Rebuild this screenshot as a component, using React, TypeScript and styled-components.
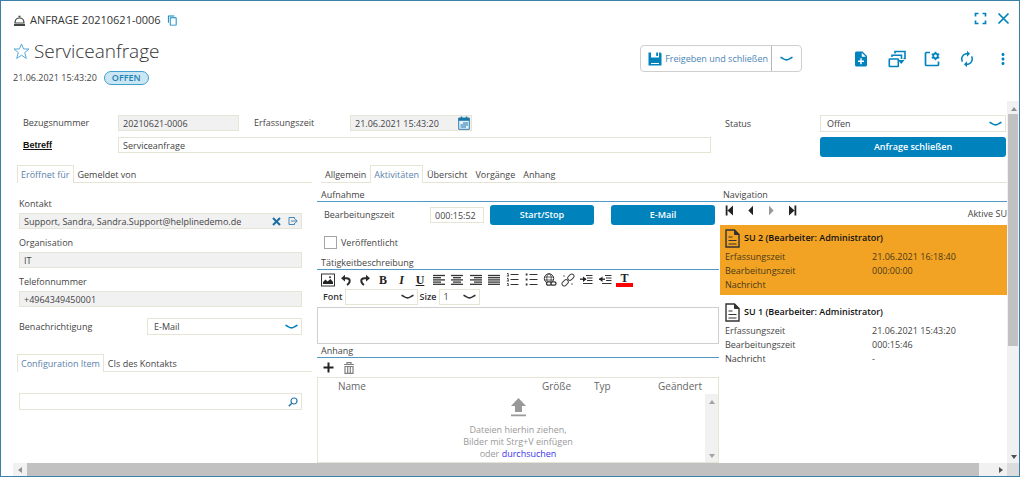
import React from "react";
import styled, { createGlobalStyle } from "styled-components";
import { MdAutorenew, MdContentCopy, MdMoreVert, MdNoteAdd } from "react-icons/md";

const c = {
  blue: "#0082bd",
  frame: "#3b80a9",
  line: "#e6e4d4",
  rule: "#4e9ac4",
  text: "#444444",
  link: "#5b82ab",
  orange: "#f2a324",
  disabled: "#f1f1f1",
  track: "#f1f1f1",
  thumb: "#c1c1c1",
};

const GlobalStyle = createGlobalStyle`
  * { box-sizing: border-box; }
  body {
    margin: 0;
    background: #fff;
    color: ${c.text};
    font-family: "Open Sans", "Liberation Sans", sans-serif;
    font-size: 9px;
    line-height: 12px;
  }
  button, input, select, textarea { font: inherit; color: inherit; margin: 0; }
  svg { display: block; flex: none; }
`;

const Window = styled.div`
  display: flex;
  flex-direction: column;
  min-height: 100vh;
  border: 1px solid ${c.frame};
`;

/* Header */
const Header = styled.header`
  display: flex;
  justify-content: space-between;
  padding: 11px 7px 16px 12px;
`;
const HeaderSide = styled.div`
  display: flex;
  flex-direction: column;
`;
const Crumb = styled.div`
  display: flex;
  align-items: center;
  height: 16px;
  font-size: 11px;
  gap: 4px;
  color: #333;
`;
const TitleRow = styled.div`
  display: flex;
  align-items: center;
  gap: 4px;
  height: 28px;
  margin: 9px 0 6px;
`;
const Title = styled.h1`
  margin: 0;
  font-size: 19px;
  line-height: 28px;
  font-weight: 300;
  color: #333;
`;
const Meta = styled.div`
  display: flex;
  align-items: center;
  gap: 7px;
`;
const Badge = styled.span`
  padding: 0 7px;
  border: 1px solid #3fa0cd;
  border-radius: 8px;
  background: #cbe6f3;
  color: #1d80b5;
  font-weight: 600;
`;
const IconButton = styled.button<{ $tone?: string }>`
  display: flex;
  align-items: center;
  justify-content: center;
  padding: 0;
  border: 0;
  background: none;
  color: ${(p) => p.$tone ?? c.blue};
`;
const CopyButton = styled(IconButton)`
  margin-left: 2px;
`;
const WindowControls = styled.div`
  display: flex;
  justify-content: flex-end;
  gap: 10px;
  padding-right: 2px;
`;
const Actions = styled.div`
  display: flex;
  align-items: center;
  margin-top: 20px;
`;
const SplitButton = styled.div`
  display: flex;
  height: 27px;
  margin-right: 50px;
  border: 1px solid #cfcfcf;
  border-radius: 4px;
`;
const SplitMain = styled(IconButton)`
  gap: 3px;
  padding: 0 3px 0 7px;
  color: #4a85b5;
`;
const SplitMore = styled(IconButton)`
  width: 30px;
  border-left: 1px solid #b5b5b5;
`;
const ActionIcons = styled.div`
  display: flex;
  align-items: center;
  gap: 18px;
`;

/* Scroll frame */
const Frame = styled.div`
  flex: 1;
  display: grid;
  grid-template-columns: minmax(0, 1fr) 12px;
  grid-template-rows: 1fr 13px;
  padding-left: 12px;
`;
const Track = styled.div<{ $vertical?: boolean }>`
  display: flex;
  flex-direction: ${(p) => (p.$vertical ? "column" : "row")};
  background: ${c.track};
`;
const TrackEnd = styled.div<{ $tone?: string }>`
  display: flex;
  align-items: center;
  justify-content: center;
  flex: none;
  width: 13px;
  height: 13px;
  color: ${(p) => p.$tone ?? "#505050"};
`;
const Thumb = styled.div<{ $grow: number }>`
  flex: ${(p) => p.$grow} 1 0;
  margin: 0 1px;
  background: ${c.thumb};
`;
const Rest = styled.div<{ $grow: number }>`
  flex: ${(p) => p.$grow} 1 0;
`;
const Corner = styled.div`
  background: #dcdcdc;
`;
const Content = styled.main`
  display: flex;
  flex-direction: column;
  min-width: 0;
`;

/* Fields */
const Input = styled.input`
  width: 100%;
  min-width: 0;
  height: 16px;
  padding: 0 4px;
  border: 1px solid ${c.line};
  border-radius: 0;
  background: #fff;
  &:read-only { background: ${c.disabled}; }
`;
const FieldBox = styled.div<{ $snug?: boolean }>`
  display: flex;
  align-items: center;
  gap: 7px;
  height: 16px;
  padding-right: ${(p) => (p.$snug ? 1 : 3)}px;
  border: 1px solid ${c.line};
  background: ${c.disabled};
`;
const SearchBox = styled(FieldBox)`
  height: 17px;
  margin: 21px 15px 0 2px;
  background: #fff;
`;
const BareInput = styled.input`
  flex: 1;
  min-width: 0;
  height: 14px;
  padding: 0 4px;
  border: 0;
  background: none;
`;
const SelectWrap = styled.span<{ $w?: number; $tone?: string }>`
  display: grid;
  align-items: center;
  ${(p) => (p.$w ? `width: ${p.$w}px;` : "")}
  color: ${(p) => p.$tone ?? c.blue};
  > * { grid-area: 1 / 1; }
  > svg { justify-self: end; margin-right: 4px; pointer-events: none; }
`;
const SelectBox = styled.select`
  appearance: none;
  width: 100%;
  height: 17px;
  padding: 0 6px;
  border: 1px solid ${c.line};
  border-radius: 0;
  background: #fff;
  color: ${c.text};
`;
const Primary = styled.button`
  height: 20px;
  border: 0;
  border-radius: 3px;
  background: ${c.blue};
  color: #fff;
  font-weight: 600;
`;

/* Top form */
const TopForm = styled.section`
  display: grid;
  grid-template-columns: minmax(0, 707fr) minmax(0, 287fr);
  padding: 14px 0 8px;
`;
const RequestGrid = styled.div`
  display: grid;
  grid-template-columns: 95px minmax(0, 121fr) 111px minmax(0, 122fr) minmax(0, 239fr);
  grid-auto-rows: 16px;
  row-gap: 6px;
  align-items: center;
  padding: 0 9px 0 10px;
`;
const StatusGrid = styled.div`
  display: grid;
  grid-template-columns: 95px minmax(0, 1fr);
  row-gap: 5px;
  align-items: center;
  padding: 0 1px 0 5px;
  ${Primary} { grid-column: 2; }
`;
const SecondLabel = styled.label`
  padding-left: 15px;
`;
const KeyLabel = styled.label`
  color: #111;
  font-family: "Liberation Sans", sans-serif;
  font-weight: 700;
  text-decoration: underline;
`;
const WideCell = styled.div`
  display: flex;
  grid-column: 2 / -1;
`;

/* Tabs */
const TabBar = styled.div<{ $left?: boolean }>`
  display: flex;
  height: 18px;
  margin: 0 ${(p) => (p.$left ? 5 : 0)}px 0 ${(p) => (p.$left ? 0 : 4)}px;
  border-bottom: 1px solid ${c.line};
`;
const Tab = styled.button<{ $on?: boolean }>`
  height: 18px;
  padding: 0 3px;
  border: 1px solid transparent;
  border-bottom: 0;
  background: none;
  color: ${(p) => (p.$on ? c.link : c.text)};
  ${(p) => p.$on && `border-color: ${c.line}; background: #fff;`}
`;

/* Panels */
const Panels = styled.div`
  flex: 1;
  display: grid;
  grid-template-columns: minmax(0, 304fr) minmax(0, 690fr);
`;
const LeftPanel = styled.section`
  padding-left: 4px;
`;
const Stack = styled.div`
  display: flex;
  flex-direction: column;
  gap: 8px;
  padding: 15px 15px 0 2px;
`;
const Field = styled.div`
  display: flex;
  flex-direction: column;
  gap: 3px;
`;
const NotifyRow = styled.div`
  display: grid;
  grid-template-columns: 128px minmax(0, 1fr);
  align-items: center;
  margin: 11px 15px 19px 2px;
`;
const RightPanel = styled.section`
  display: flex;
  flex-direction: column;
`;
const Columns = styled.div`
  flex: 1;
  display: grid;
  grid-template-columns: minmax(0, 402fr) minmax(0, 288fr);
`;
const Column = styled.div`
  display: flex;
  flex-direction: column;
  min-width: 0;
`;
const SectionTitle = styled.h2<{ $tight?: boolean }>`
  margin: 0;
  padding: ${(p) => (p.$tight ? 1 : 6)}px 4px 0;
  border-bottom: 1px solid ${c.rule};
  font: inherit;
`;
const TimeRow = styled.div`
  display: grid;
  grid-template-columns: 106px 54px minmax(0, 1fr);
  align-items: center;
  padding: 3px 4px 0 7px;
`;
const ButtonPair = styled.div`
  display: grid;
  grid-template-columns: 1fr 1fr;
  gap: 17px;
  margin-left: 6px;
`;
const CheckRow = styled.label`
  display: flex;
  align-items: center;
  gap: 4px;
  margin: 11px 7px 2px;
  input {
    appearance: none;
    width: 13px;
    height: 13px;
    border: 1px solid #a5a5a5;
    background: #fff;
  }
`;
const Toolbar = styled.div`
  display: flex;
  align-items: center;
  justify-content: space-between;
  max-width: 319px;
  height: 19px;
  padding: 0 3px;
`;
const Tool = styled(IconButton)`
  flex: 0 1 15px;
  height: 15px;
  color: #333;
`;
const Letter = styled.span`
  font: bold 12px/14px "Liberation Serif", serif;
  color: #222;
`;
const Italic = styled(Letter)`
  font-style: italic;
`;
const Underlined = styled(Letter)`
  text-decoration: underline;
`;
const ColorLetter = styled(Letter)`
  flex: none;
  width: 17px;
  height: 14px;
  line-height: 10px;
  border-bottom: 4px solid #f00;
`;
const FontRow = styled.div`
  display: flex;
  align-items: center;
  gap: 2px;
  height: 16px;
  padding-left: 6px;
  font-weight: 600;
  color: #333;
  ${SelectBox} { height: 16px; font-weight: 400; padding: 0 4px; }
`;
const Editor = styled.textarea`
  height: 37px;
  margin-top: 2px;
  border: 1px solid #cfcfcf;
  border-radius: 0;
  resize: none;
`;
const FileTools = styled.div`
  display: flex;
  align-items: center;
  gap: 10px;
  height: 19px;
  padding-left: 6px;
`;
const FileBox = styled.div`
  flex: 1;
  display: flex;
  flex-direction: column;
  border: 1px solid ${c.line};
  font-size: 10px;
`;
const FileTable = styled.table`
  width: 100%;
  table-layout: fixed;
  border-collapse: collapse;
  color: #666;
  th { height: 16px; padding: 0; font-weight: 400; text-align: left; }
`;
const HeadCell = styled.th<{ $w: number }>`
  width: ${(p) => p.$w}%;
`;
const DropRow = styled.div`
  flex: 1;
  display: flex;
`;
const DropZone = styled.div`
  flex: 1;
  display: flex;
  flex-direction: column;
  align-items: center;
  padding: 4px 0 0 13px;
  color: #999;
  font-size: 9px;
  text-align: center;
  svg { margin-bottom: 7px; }
  a { color: #3a34f0; text-decoration: none; }
`;
const FileTrack = styled(Track)`
  width: 13px;
  justify-content: space-between;
`;

/* Navigation */
const NavBar = styled.div`
  display: flex;
  align-items: center;
  justify-content: space-between;
  height: 23px;
  padding-left: 6px;
`;
const NavButtons = styled.div`
  display: flex;
  align-items: center;
  gap: 12px;
  padding-bottom: 6px;
`;
const Card = styled.article<{ $on?: boolean }>`
  height: 70px;
  margin: 0 0 4px 1px;
  padding: 3px 5px 0;
  ${(p) => p.$on && `background: ${c.orange}; color: #4a3a18;`}
`;
const CardHead = styled.h3`
  display: flex;
  align-items: center;
  gap: 4px;
  height: 20px;
  margin: 0 0 2px;
  font-size: 9px;
  font-weight: 600;
  color: #111;
`;
const CardData = styled.dl`
  display: grid;
  grid-template-columns: 147px minmax(0, 1fr);
  grid-auto-rows: 14px;
  margin: 0;
  line-height: 14px;
  dd { margin: 0; }
`;

/* Icons */
const Bell = () => (
  <svg width="13" height="13" viewBox="0 0 13 13" fill="none" stroke="#444">
    <path d="M2 9C2 5.500 4 4 6.500 4S11 5.500 11 9Z" strokeWidth="1.200" />
    <path d="M5.500 2.500H7.500" strokeWidth="1.600" />
    <path d="M1 11H12" strokeWidth="2" />
  </svg>
);
const Chevron = () => (
  <svg width="13" height="6" viewBox="0 0 13 6" fill="none" stroke="currentColor" strokeWidth="1.600">
    <path d="M.5 1.200C3 2.200 4.500 3.900 6.500 3.900S10 2.200 12.500 1.200" />
  </svg>
);
const Arrow = ({ dir }: { dir: "up" | "down" | "left" | "right" }) => {
  const d = { up: "M0 6 3 2 6 6Z", down: "M0 1 3 5 6 1Z", left: "M5 0 1 3 5 6Z", right: "M1 0 5 3 1 6Z" }[dir];
  return (
    <svg width="6" height="6" viewBox="0 0 6 6" fill="currentColor">
      <path d={d} />
    </svg>
  );
};
const Star = () => (
  <svg width="17" height="17" viewBox="0 0 17 17" fill="none" stroke="#55a9d6" strokeWidth="1">
    <path d="M8.500 1 10.600 6H16L11.700 9.600 13.300 15.500 8.500 12.200 3.700 15.500 5.300 9.600 1 6H6.400Z" />
  </svg>
);
const Fullscreen = () => (
  <svg width="13" height="13" viewBox="0 0 13 13" fill="none" stroke="currentColor" strokeWidth="1.700">
    <path d="M1.500 4.500V1.500H4.500M8.500 1.500H11.500V4.500M11.500 8.500V11.500H8.500M4.500 11.500H1.500V8.500" />
  </svg>
);
const Close = () => (
  <svg width="13" height="13" viewBox="0 0 13 13" fill="none" stroke="currentColor" strokeWidth="1.700">
    <path d="M1.500 1.500 11.500 11.500M11.500 1.500 1.500 11.500" />
  </svg>
);
const Disk = () => (
  <svg width="14" height="14" viewBox="0 0 14 14" fill={c.blue}>
    <path d="M.5.5H3V5.500H11V.5H12.500L13.500 1.500V13.500H.5Z" />
    <path d="M8.200.5H10V4H8.200Z" />
    <path d="M3 11.500H11" stroke="#fff" strokeWidth="1" />
  </svg>
);
const Windows = () => (
  <svg width="18" height="18" viewBox="0 0 18 18" fill="none" stroke="currentColor" strokeWidth="1.600">
    <rect x="1.300" y="9" width="9" height="7.500" rx=".5" />
    <path d="M4 7V5.300H13.500V9M7 3.500V1.500H17V8.500H15.500" />
    <path d="M10 10H16.500L13.200 14Z" fill="currentColor" stroke="none" />
  </svg>
);
const PanelGear = () => (
  <svg width="16" height="16" viewBox="0 0 16 16" fill="none" stroke="currentColor">
    <path d="M6 1.500H2.500A1 1 0 0 0 1.500 2.500V13.500A1 1 0 0 0 2.500 14.500H13.500A1 1 0 0 0 14.500 13.500V10.500" strokeWidth="1.700" />
    <circle cx="11.500" cy="5" r="2.300" strokeWidth="1.800" />
    <path d="M11.500.7V2.200M11.500 7.800V9.300M7.800 2.900 9 3.600M14 6.400 15.200 7.100M7.800 7.100 9 6.400M14 3.600 15.200 2.900" strokeWidth="1.700" />
  </svg>
);
const Calendar = () => (
  <svg width="12" height="14" viewBox="0 0 12 14">
    <path d="M.7 2H11.300V13.300H.7Z" fill="#e6f1f8" stroke="#2a7fb0" />
    <path d="M.5 2H11.500V4.800H.5Z" fill="#1c76a8" />
    <path d="M3.500.5V3.500M8.500.5V3.500" stroke="#1c76a8" strokeWidth="1.500" />
    <path d="M5 7H10M2.500 9H10M2.500 11H8" stroke="#5ba0c8" strokeWidth="1.300" />
  </svg>
);
const Clear = () => (
  <svg width="9" height="9" viewBox="0 0 9 9" stroke="#1b6ea3" strokeWidth="2">
    <path d="M1 1 8 8M8 1 1 8" />
  </svg>
);
const OpenEntry = () => (
  <svg width="10" height="10" viewBox="0 0 10 10" fill="none" stroke="#4486b4" strokeWidth="1">
    <path d="M6.500 3V1.500H1V8.500H6.500V7M3 5H9M7 2.800 9.200 5 7 7.200" />
  </svg>
);
const Search = () => (
  <svg width="10" height="10" viewBox="0 0 10 10" fill="none" stroke="#2f78ab" strokeWidth="1.200">
    <circle cx="6" cy="4" r="3" />
    <path d="M3.800 6.200.8 9.200" strokeWidth="1.500" />
  </svg>
);
const Picture = () => (
  <svg width="14" height="14" viewBox="0 0 14 14">
    <rect x=".5" y="1" width="13" height="12" fill="#fff" stroke="#333" />
    <path d="M2 11V9L4.500 6.500 6.500 8.500 9.500 6 12 9V11Z" fill="#222" />
    <circle cx="9" cy="4.300" r="1" fill="#333" />
  </svg>
);
const Undo = ({ flip }: { flip?: boolean }) => (
  <svg width="12" height="12" viewBox="0 0 12 12">
    <g transform={flip ? "matrix(-1 0 0 1 12 0)" : undefined}>
      <path d="M1 4.200 5 .8V7.600Z" fill="#2b2b2b" />
      <path d="M4 4.200H6.500C11 4.200 10.500 9 7 11" fill="none" stroke="#2b2b2b" strokeWidth="1.900" />
    </g>
  </svg>
);
const Lines = ({ rows }: { rows: [number, number][] }) => (
  <svg width="12" height="12" viewBox="0 0 12 12" stroke="#333" strokeWidth="1.300">
    {rows.map(([a, b], i) => (
      <path key={i} d={`M${a} ${1.5 + i * 2.2}H${b}`} />
    ))}
  </svg>
);
const ListIcon = ({ numbers }: { numbers?: boolean }) => (
  <svg width="13" height="13" viewBox="0 0 13 13" fill="none" stroke="#333">
    {[1.5, 6.5, 11.5].map((y) => (
      <g key={y}>
        <path d={`M4.500 ${y}H12.500`} />
        {numbers ? (
          <path d={`M1 ${y - 1}H2.200V${y + 1.5}M.8 ${y + 1.5}H3`} strokeWidth=".9" />
        ) : (
          <path d={`M.7 ${y}H2.500`} strokeWidth="2" />
        )}
      </g>
    ))}
  </svg>
);
const GlobeLink = () => (
  <svg width="14" height="14" viewBox="0 0 14 14" fill="none" stroke="#333">
    <circle cx="6" cy="5.500" r="4.700" />
    <ellipse cx="6" cy="5.500" rx="2.200" ry="4.700" strokeWidth=".8" />
    <path d="M1.500 4H10.500M1.500 7H10.500" strokeWidth=".8" />
    <rect x="3.500" y="8.800" width="5" height="3.400" rx="1.700" fill="#fff" strokeWidth="1.300" />
    <rect x="8" y="8.800" width="5" height="3.400" rx="1.700" fill="#fff" strokeWidth="1.300" />
  </svg>
);
const Unlink = () => (
  <svg width="14" height="14" viewBox="0 0 14 14" fill="none" stroke="#444">
    <g transform="rotate(-45 7 7)">
      <rect x="-.5" y="4.800" width="7" height="4.400" rx="2.200" />
      <rect x="7.500" y="4.800" width="7" height="4.400" rx="2.200" />
    </g>
    <path d="M3 2V4M11 10V12" strokeWidth=".8" />
  </svg>
);
const Indent = ({ out }: { out?: boolean }) => (
  <svg width="13" height="11" viewBox="0 0 13 11" fill="none" stroke="#333">
    <path d="M6 1.500H12.500M7 4H12.500M7 6.500H12.500M3 9.500H12.500" />
    <path d="M0 5.200H6" strokeWidth="1.400" />
    <path d={out ? "M3.500 2.500V8L0 5.200Z" : "M3 2.500V8L6.500 5.200Z"} fill="#222" stroke="none" />
  </svg>
);
const Plus = () => (
  <svg width="11" height="11" viewBox="0 0 11 11" stroke="#222" strokeWidth="2">
    <path d="M5.500.5V10.500M.5 5.500H10.500" />
  </svg>
);
const Trash = () => (
  <svg width="10" height="12" viewBox="0 0 10 12" fill="none" stroke="#808080">
    <path d="M0 2.500H10M3 2V.7H7V2M1 4.500H9V11.300H1ZM3.700 4.500V11M6.300 4.500V11" strokeWidth="1.200" />
  </svg>
);
const Upload = () => (
  <svg width="15" height="19" viewBox="0 0 15 19" fill="#999">
    <path d="M7.500 0 15 8H11V14H4V8H0ZM0 16.500H15V18.300H0Z" />
  </svg>
);
const Step = ({ back, end }: { back?: boolean; end?: boolean }) => (
  <svg width="9" height="11" viewBox="0 0 9 11" fill="currentColor">
    <g transform={back ? "matrix(-1 0 0 1 9 0)" : undefined}>
      <path d={end ? "M1 .5 6.500 5.500 1 10.500ZM6.500.5H8.300V10.500H6.500Z" : "M2 .8 6.700 5.500 2 10.200Z"} />
    </g>
  </svg>
);
const Sheet = () => (
  <svg width="15" height="19" viewBox="0 0 15 19" fill="none" stroke="#333">
    <path d="M1 1H9.500L14 5.500V18H1Z" strokeWidth="1.400" />
    <path d="M9.500 1V5.500H14Z" fill="#333" />
    <path d="M3.500 8H7.500M3.500 11.500H11.500M3.500 15H11.500" />
  </svg>
);

const alignments: { name: string; rows: [number, number][] }[] = [
  { name: "Linksbündig", rows: [[0, 12], [0, 8], [0, 12], [0, 8], [0, 12]] },
  { name: "Zentriert", rows: [[0, 12], [2, 10], [0, 12], [2, 10], [0, 12]] },
  { name: "Rechtsbündig", rows: [[0, 12], [4, 12], [0, 12], [4, 12], [0, 12]] },
  { name: "Blocksatz", rows: [[0, 12], [0, 12], [0, 12], [0, 12], [0, 12]] },
];

const units = [
  { title: "SU 2 (Bearbeiter: Administrator)", created: "21.06.2021 16:18:40", time: "000:00:00", message: "" },
  { title: "SU 1 (Bearbeiter: Administrator)", created: "21.06.2021 15:43:20", time: "000:15:46", message: "-" },
];

export default function App() {
  return (
    <>
      <GlobalStyle />
      <Window>
        <Header>
          <HeaderSide>
            <Crumb>
              <Bell />
              <span>ANFRAGE 20210621-0006</span>
              <CopyButton aria-label="Kopieren"><MdContentCopy size={11} /></CopyButton>
            </Crumb>
            <TitleRow>
              <IconButton aria-label="Favorit"><Star /></IconButton>
              <Title>Serviceanfrage</Title>
            </TitleRow>
            <Meta>
              <time>21.06.2021 15:43:20</time>
              <Badge>OFFEN</Badge>
            </Meta>
          </HeaderSide>
          <HeaderSide>
            <WindowControls>
              <IconButton aria-label="Vollbild"><Fullscreen /></IconButton>
              <IconButton aria-label="Schließen"><Close /></IconButton>
            </WindowControls>
            <Actions>
              <SplitButton>
                <SplitMain><Disk />Freigeben und schließen</SplitMain>
                <SplitMore aria-label="Weitere Optionen"><Chevron /></SplitMore>
              </SplitButton>
              <ActionIcons>
                <IconButton aria-label="Neu"><MdNoteAdd size={18} /></IconButton>
                <IconButton aria-label="Fenster"><Windows /></IconButton>
                <IconButton aria-label="Einstellungen"><PanelGear /></IconButton>
                <IconButton aria-label="Aktualisieren"><MdAutorenew size={18} /></IconButton>
                <IconButton aria-label="Mehr"><MdMoreVert size={18} /></IconButton>
              </ActionIcons>
            </Actions>
          </HeaderSide>
        </Header>

        <Frame>
          <Content>
            <TopForm>
              <RequestGrid>
                <label htmlFor="number">Bezugsnummer</label>
                <Input id="number" readOnly value="20210621-0006" />
                <SecondLabel htmlFor="created">Erfassungszeit</SecondLabel>
                <FieldBox $snug>
                  <BareInput id="created" readOnly value="21.06.2021 15:43:20" />
                  <IconButton aria-label="Kalender"><Calendar /></IconButton>
                </FieldBox>
                <span />
                <KeyLabel htmlFor="subject">Betreff</KeyLabel>
                <WideCell><Input id="subject" defaultValue="Serviceanfrage" /></WideCell>
              </RequestGrid>
              <StatusGrid>
                <label htmlFor="status">Status</label>
                <SelectWrap>
                  <SelectBox id="status"><option>Offen</option></SelectBox>
                  <Chevron />
                </SelectWrap>
                <Primary>Anfrage schließen</Primary>
              </StatusGrid>
            </TopForm>

            <Panels>
              <LeftPanel>
                <TabBar $left role="tablist">
                  <Tab $on role="tab">Eröffnet für</Tab>
                  <Tab role="tab">Gemeldet von</Tab>
                </TabBar>
                <Stack>
                  <Field>
                    <label htmlFor="contact">Kontakt</label>
                    <FieldBox>
                      <BareInput id="contact" readOnly value="Support, Sandra, Sandra.Support@helplinedemo.de" />
                      <IconButton aria-label="Leeren"><Clear /></IconButton>
                      <IconButton aria-label="Öffnen"><OpenEntry /></IconButton>
                    </FieldBox>
                  </Field>
                  <Field>
                    <label htmlFor="org">Organisation</label>
                    <Input id="org" readOnly value="IT" />
                  </Field>
                  <Field>
                    <label htmlFor="phone">Telefonnummer</label>
                    <Input id="phone" readOnly value="+4964349450001" />
                  </Field>
                </Stack>
                <NotifyRow>
                  <label htmlFor="notify">Benachrichtigung</label>
                  <SelectWrap>
                    <SelectBox id="notify"><option>E-Mail</option></SelectBox>
                    <Chevron />
                  </SelectWrap>
                </NotifyRow>
                <TabBar $left role="tablist">
                  <Tab $on role="tab">Configuration Item</Tab>
                  <Tab role="tab">CIs des Kontakts</Tab>
                </TabBar>
                <SearchBox>
                  <BareInput aria-label="Configuration Item suchen" />
                  <IconButton aria-label="Suchen"><Search /></IconButton>
                </SearchBox>
              </LeftPanel>

              <RightPanel>
                <TabBar role="tablist">
                  <Tab role="tab">Allgemein</Tab>
                  <Tab $on role="tab">Aktivitäten</Tab>
                  <Tab role="tab">Übersicht</Tab>
                  <Tab role="tab">Vorgänge</Tab>
                  <Tab role="tab">Anhang</Tab>
                </TabBar>
                <Columns>
                  <Column>
                    <SectionTitle>Aufnahme</SectionTitle>
                    <TimeRow>
                      <label htmlFor="time">Bearbeitungszeit</label>
                      <Input id="time" defaultValue="000:15:52" />
                      <ButtonPair>
                        <Primary>Start/Stop</Primary>
                        <Primary>E-Mail</Primary>
                      </ButtonPair>
                    </TimeRow>
                    <CheckRow><input type="checkbox" />Veröffentlicht</CheckRow>
                    <SectionTitle>Tätigkeitbeschreibung</SectionTitle>
                    <Toolbar>
                      <Tool aria-label="Bild"><Picture /></Tool>
                      <Tool aria-label="Rückgängig"><Undo /></Tool>
                      <Tool aria-label="Wiederholen"><Undo flip /></Tool>
                      <Tool><Letter>B</Letter></Tool>
                      <Tool><Italic>I</Italic></Tool>
                      <Tool><Underlined>U</Underlined></Tool>
                      {alignments.map((a) => (
                        <Tool key={a.name} aria-label={a.name}><Lines rows={a.rows} /></Tool>
                      ))}
                      <Tool aria-label="Nummerierung"><ListIcon numbers /></Tool>
                      <Tool aria-label="Aufzählung"><ListIcon /></Tool>
                      <Tool aria-label="Link"><GlobeLink /></Tool>
                      <Tool aria-label="Link entfernen"><Unlink /></Tool>
                      <Tool aria-label="Einrücken"><Indent /></Tool>
                      <Tool aria-label="Ausrücken"><Indent out /></Tool>
                      <Tool><ColorLetter>T</ColorLetter></Tool>
                    </Toolbar>
                    <FontRow>
                      <label htmlFor="font">Font</label>
                      <SelectWrap $w={73} $tone="#333">
                        <SelectBox id="font"><option></option></SelectBox>
                        <Chevron />
                      </SelectWrap>
                      <label htmlFor="size">Size</label>
                      <SelectWrap $w={41} $tone="#333">
                        <SelectBox id="size"><option>1</option></SelectBox>
                        <Chevron />
                      </SelectWrap>
                    </FontRow>
                    <Editor aria-label="Tätigkeitbeschreibung" />
                    <SectionTitle $tight>Anhang</SectionTitle>
                    <FileTools>
                      <IconButton aria-label="Hinzufügen"><Plus /></IconButton>
                      <IconButton aria-label="Löschen"><Trash /></IconButton>
                    </FileTools>
                    <FileBox>
                      <FileTable>
                        <thead>
                          <tr>
                            <HeadCell as="td" $w={5} />
                            <HeadCell $w={51}>Name</HeadCell>
                            <HeadCell $w={13}>Größe</HeadCell>
                            <HeadCell $w={16}>Typ</HeadCell>
                            <HeadCell $w={15}>Geändert</HeadCell>
                          </tr>
                        </thead>
                      </FileTable>
                      <DropRow>
                        <DropZone>
                          <Upload />
                          <span>Dateien hierhin ziehen,</span>
                          <span>Bilder mit Strg+V einfügen</span>
                          <span>oder <a href="#durchsuchen">durchsuchen</a></span>
                        </DropZone>
                        <FileTrack $vertical aria-hidden>
                          <TrackEnd $tone="#a3a3a3"><Arrow dir="up" /></TrackEnd>
                          <TrackEnd $tone="#a3a3a3"><Arrow dir="down" /></TrackEnd>
                        </FileTrack>
                      </DropRow>
                    </FileBox>
                  </Column>

                  <Column>
                    <SectionTitle>Navigation</SectionTitle>
                    <NavBar>
                      <NavButtons>
                        <IconButton $tone="#222" aria-label="Erste"><Step back end /></IconButton>
                        <IconButton $tone="#222" aria-label="Zurück"><Step back /></IconButton>
                        <IconButton $tone="#999" aria-label="Weiter"><Step /></IconButton>
                        <IconButton $tone="#222" aria-label="Letzte"><Step end /></IconButton>
                      </NavButtons>
                      <span>Aktive SU</span>
                    </NavBar>
                    {units.map((u, i) => (
                      <Card key={u.title} $on={i === 0}>
                        <CardHead><Sheet />{u.title}</CardHead>
                        <CardData>
                          <dt>Erfassungszeit</dt>
                          <dd>{u.created}</dd>
                          <dt>Bearbeitungszeit</dt>
                          <dd>{u.time}</dd>
                          <dt>Nachricht</dt>
                          <dd>{u.message}</dd>
                        </CardData>
                      </Card>
                    ))}
                  </Column>
                </Columns>
              </RightPanel>
            </Panels>
          </Content>
          <Track $vertical aria-hidden>
            <TrackEnd $tone="#909090"><Arrow dir="up" /></TrackEnd>
            <Thumb $grow={232} />
            <Rest $grow={104} />
            <TrackEnd><Arrow dir="down" /></TrackEnd>
          </Track>
          <Track aria-hidden>
            <TrackEnd $tone="#909090"><Arrow dir="left" /></TrackEnd>
            <Thumb $grow={953} />
            <Rest $grow={14} />
            <TrackEnd><Arrow dir="right" /></TrackEnd>
          </Track>
          <Corner />
        </Frame>
      </Window>
    </>
  );
}
